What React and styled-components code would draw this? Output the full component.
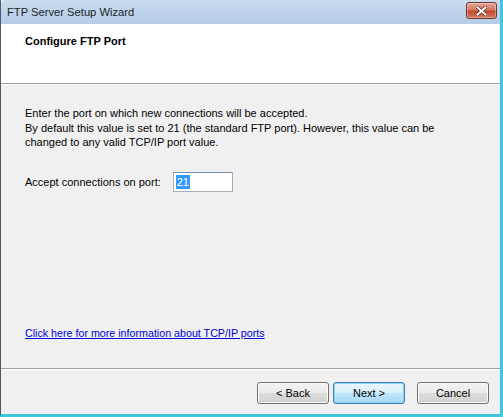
import React from 'react';
import styled, { createGlobalStyle } from 'styled-components';

const Global = createGlobalStyle`
  html, body {
    margin: 0;
    padding: 0;
    background: #f0f0f0;
  }
  * {
    box-sizing: border-box;
  }
`;

const Window = styled.div`
  width: 503px;
  height: 417px;
  display: flex;
  flex-direction: column;
  background: #f0f0f0;
  border-left: 1px solid #4a5a6c;
  border-right: 3px solid #3fc7dc;
  border-bottom: 3px solid #3fc7dc;
  font-family: 'Liberation Sans', Arial, sans-serif;
  font-size: 11px;
  color: #000;
  overflow: hidden;
`;

const TitleBar = styled.div`
  height: 24px;
  flex: none;
  display: flex;
  align-items: center;
  justify-content: space-between;
  padding: 0 3px 0 6px;
  background: linear-gradient(to bottom, #cbdcee 0%, #bed3ea 50%, #b6cde7 100%);
  border-top-left-radius: 5px;
  font-size: 11.2px;
  color: #1e1e1e;
`;

const CloseButton = styled.div`
  width: 31px;
  height: 17px;
  margin-top: -3px;
  border: 1px solid #6d3434;
  border-radius: 3px;
  background: linear-gradient(to bottom, #e4a695 0%, #d6775e 45%, #c24b2f 55%, #d5765c 100%);
  display: flex;
  align-items: center;
  justify-content: center;
  box-shadow: inset 0 0 0 1px rgba(255, 255, 255, 0.35);
`;

const Header = styled.div`
  height: 60px;
  flex: none;
  background: #fff;
  padding: 11px 0 0 24px;
  border-bottom: 1px solid #a0a0a0;
  box-shadow: 0 1px 0 #fff;
`;

const HeaderTitle = styled.div`
  font-weight: bold;
  font-size: 11px;
`;

const Body = styled.div`
  flex: 1;
  display: flex;
  flex-direction: column;
  padding: 22px 24px 0 24px;
  border-bottom: 1px solid #a0a0a0;
  box-shadow: 0 1px 0 #fff;
`;

const Paragraph = styled.p`
  margin: 0;
  line-height: 14.5px;
`;

const PortRow = styled.div`
  display: flex;
  align-items: center;
  gap: 12px;
  margin-top: 22px;
`;

const PortInput = styled.div`
  width: 60px;
  height: 20px;
  background: #fff;
  border: 1px solid #abadb3;
  border-top-color: #7a8ea8;
  padding: 2px 2px;
  display: flex;
  align-items: center;
`;

const Selected = styled.span`
  background: #3399ff;
  color: #fff;
  line-height: 14px;
  padding: 0 1px;
`;

const Spacer = styled.div`
  flex: 1;
`;

const InfoLink = styled.a`
  color: #0000dd;
  text-decoration: underline;
  font-size: 10.7px;
  margin-bottom: 29px;
  cursor: pointer;
`;

const Footer = styled.div`
  height: 45px;
  flex: none;
  display: flex;
  align-items: flex-start;
  padding: 13px 11px 0 0;
  justify-content: flex-end;
`;

const Button = styled.div`
  width: 72px;
  height: 22px;
  margin-left: ${p => p.$gap || 0}px;
  border: 1px solid ${p => (p.$default ? '#3c7fb1' : '#707070')};
  border-radius: 3px;
  background: ${p =>
    p.$default
      ? 'linear-gradient(to bottom, #eaf6fd 0%, #d9f0fc 50%, #bee6fd 51%, #a7d9f5 100%)'
      : 'linear-gradient(to bottom, #f2f2f2 0%, #ebebeb 50%, #dddddd 51%, #cfcfcf 100%)'};
  box-shadow: inset 0 0 0 1px ${p => (p.$default ? '#8fd4f4' : '#fcfcfc')};
  display: flex;
  align-items: center;
  justify-content: center;
  color: #000;
`;

const CloseIcon = () => (
  <svg width="11" height="10" viewBox="0 0 11 10">
    <path d="M1.5 1.5 L9.5 8.5 M9.5 1.5 L1.5 8.5" stroke="#5a2a20" strokeWidth="3.4" strokeLinecap="square" />
    <path d="M1.5 1.5 L9.5 8.5 M9.5 1.5 L1.5 8.5" stroke="#fff" strokeWidth="2" strokeLinecap="square" />
  </svg>
);

export default function App() {
  return (
    <>
      <Global />
      <Window>
        <TitleBar>
          <span>FTP Server Setup Wizard</span>
          <CloseButton>
            <CloseIcon />
          </CloseButton>
        </TitleBar>
        <Header>
          <HeaderTitle>Configure FTP Port</HeaderTitle>
        </Header>
        <Body>
          <Paragraph>
            Enter the port on which new connections will be accepted.
            <br />
            By default this value is set to 21 (the standard FTP port). However, this value can be
            <br />
            changed to any valid TCP/IP port value.
          </Paragraph>
          <PortRow>
            <span>Accept connections on port:</span>
            <PortInput>
              <Selected>21</Selected>
            </PortInput>
          </PortRow>
          <Spacer />
          <InfoLink>Click here for more information about TCP/IP ports</InfoLink>
        </Body>
        <Footer>
          <Button>&lt; Back</Button>
          <Button $default $gap={4}>Next &gt;</Button>
          <Button $gap={12}>Cancel</Button>
        </Footer>
      </Window>
    </>
  );
}
